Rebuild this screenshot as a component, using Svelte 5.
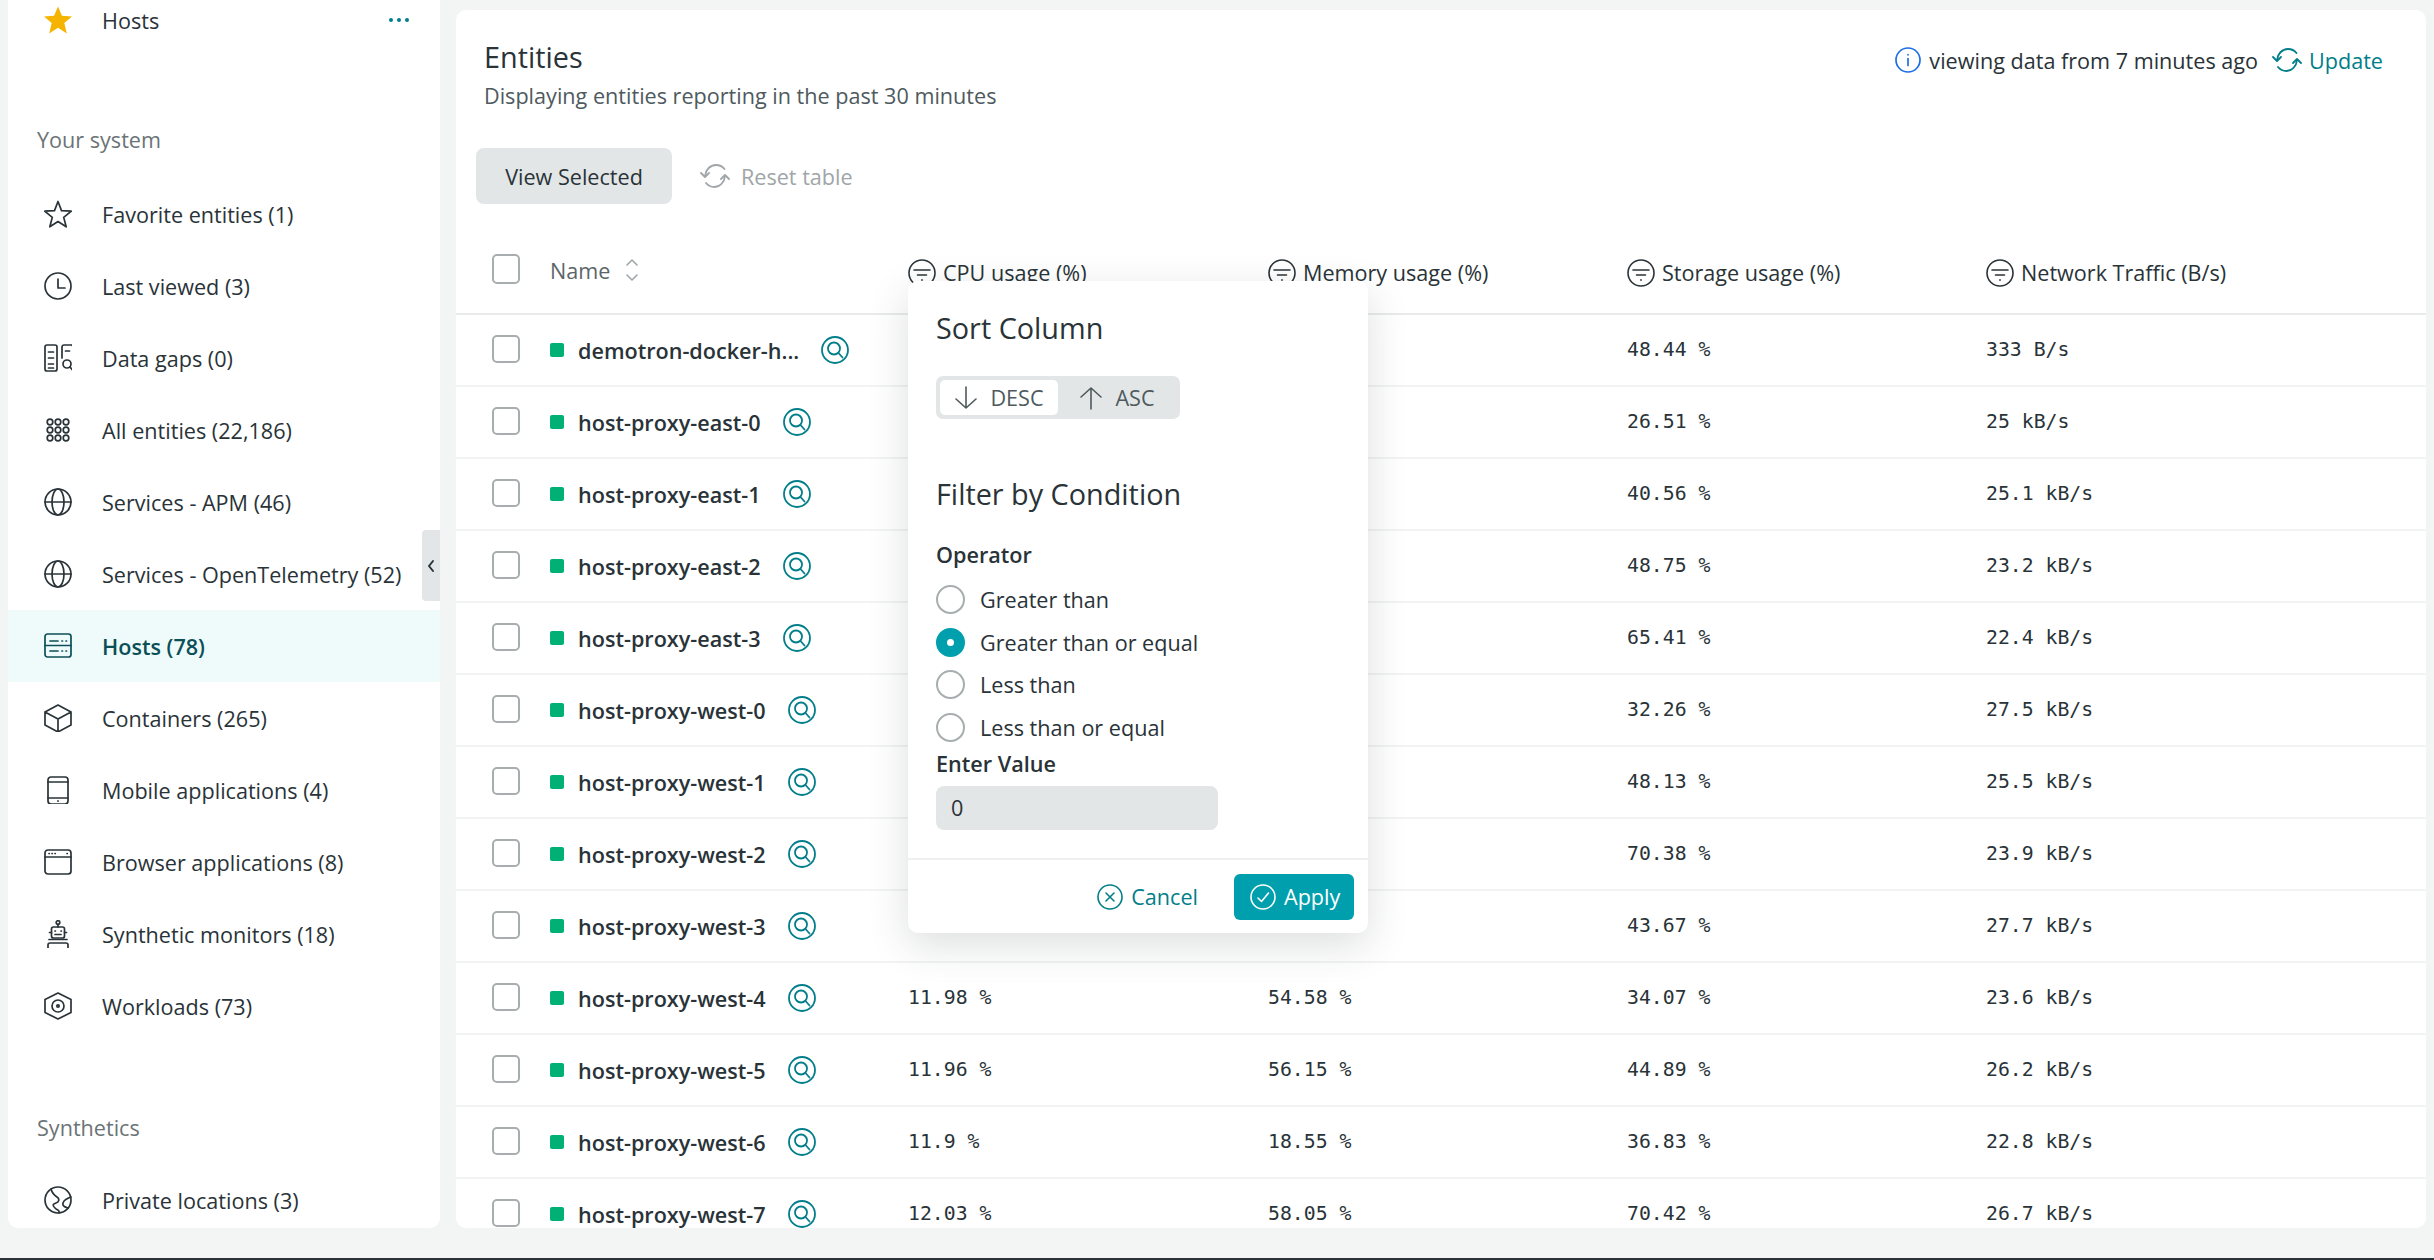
<script>
  const nav = [
    ['star', 'Favorite entities (1)'],
    ['clock', 'Last viewed (3)'],
    ['gaps', 'Data gaps (0)'],
    ['grid', 'All entities (22,186)'],
    ['globe', 'Services - APM (46)'],
    ['globe', 'Services - OpenTelemetry (52)'],
    ['server', 'Hosts (78)'],
    ['cube', 'Containers (265)'],
    ['tablet', 'Mobile applications (4)'],
    ['browser', 'Browser applications (8)'],
    ['robot', 'Synthetic monitors (18)'],
    ['hexagon', 'Workloads (73)']
  ];
  const rows = [
    ['demotron-docker-h...', '', '', '48.44 %', '333 B/s'],
    ['host-proxy-east-0', '', '', '26.51 %', '25 kB/s'],
    ['host-proxy-east-1', '', '', '40.56 %', '25.1 kB/s'],
    ['host-proxy-east-2', '', '', '48.75 %', '23.2 kB/s'],
    ['host-proxy-east-3', '', '', '65.41 %', '22.4 kB/s'],
    ['host-proxy-west-0', '', '', '32.26 %', '27.5 kB/s'],
    ['host-proxy-west-1', '', '', '48.13 %', '25.5 kB/s'],
    ['host-proxy-west-2', '', '', '70.38 %', '23.9 kB/s'],
    ['host-proxy-west-3', '', '', '43.67 %', '27.7 kB/s'],
    ['host-proxy-west-4', '11.98 %', '54.58 %', '34.07 %', '23.6 kB/s'],
    ['host-proxy-west-5', '11.96 %', '56.15 %', '44.89 %', '26.2 kB/s'],
    ['host-proxy-west-6', '11.9 %', '18.55 %', '36.83 %', '22.8 kB/s'],
    ['host-proxy-west-7', '12.03 %', '58.05 %', '70.42 %', '26.7 kB/s']
  ];
  const heads = ['CPU usage (%)', 'Memory usage (%)', 'Storage usage (%)', 'Network Traffic (B/s)'];
  const ops = [['Greater than', false], ['Greater than or equal', true], ['Less than', false], ['Less than or equal', false]];
</script>

{#snippet navIcon(name)}
  <svg class="nav-icon" viewBox="0 0 28 28" fill="none" stroke="currentColor" stroke-width="1.7" stroke-linejoin="round" stroke-linecap="round">
    {#if name === 'star'}
      <polygon points="14,1.5 17.5,10.6 27.3,11.2 19.7,17.4 22.2,26.8 14,21.5 5.8,26.8 8.3,17.4 .7,11.2 10.5,10.6" />
    {:else if name === 'clock'}
      <circle cx="14" cy="14" r="13" /><path d="M14 7v9h7" />
    {:else if name === 'gaps'}
      <rect x="1" y="1" width="12" height="26" rx="2" /><path d="M4.5 8h5M4.5 14h5M4.5 20h5M4.5 24h5" />
      <path d="M18 14V3a2 2 0 0 1 2-2h7a2 2 0 0 1 2 2v11M21.5 7h4" /><circle cx="23" cy="20" r="4" /><path d="M26 23l3 3.5" />
    {:else if name === 'grid'}
      {#each [6, 14, 22] as y}{#each [6, 14, 22] as x}<circle cx={x} cy={y} r="2.8" />{/each}{/each}
    {:else if name === 'globe'}
      <circle cx="14" cy="14" r="13" /><ellipse cx="14" cy="14" rx="6" ry="13" /><path d="M1 14h26" />
    {:else if name === 'server'}
      <rect x="1" y="2" width="26" height="23" rx="2.5" /><path d="M1 13.5h26M6 9h8M6 19h8M18 9h.5M22 9h.5M18 19h.5M22 19h.5" />
    {:else if name === 'cube'}
      <path d="M14 1l13 7v13l-13 7-13-7V8zM1 8l13 7 13-7M14 15v13" />
    {:else if name === 'tablet'}
      <rect x="4" y="1" width="20" height="27" rx="3" /><path d="M4 6h20M4 22h20M13.8 25h.4" />
    {:else if name === 'browser'}
      <rect x="1" y="2" width="26" height="24" rx="3" /><path d="M1 9h26M5 5.5h.3M8 5.5h.3M11 5.5h.3M23 5.5h.3" />
    {:else if name === 'robot'}
      <circle cx="14" cy="2.500" r="1.800" /><path d="M14 4.300V7" /><rect x="7.500" y="7" width="13" height="11" rx="2" /><path d="M5.500 12.500h2M20.500 12.500h2M11 11h.4M17 11h.4M11 14.500h6M5 19.500h18M4 28v-3a2 2 0 0 1 2-2h16a2 2 0 0 1 2 2v3" />
    {:else if name === 'hexagon'}
      <path d="M14 1l13 6.500v13L14 27 1 20.500v-13z" /><circle cx="14" cy="14" r="6" /><circle cx="14" cy="14" r="1.200" />
    {:else if name === 'planet'}
      <circle cx="14" cy="14" r="13" /><path d="M7 3c1 4 3 6 6 8s2 5-1 6-4 2-1 5 5 2 4 5M27 11c-3 1-7 3-8 6s2 4 5 5" />
    {/if}
  </svg>
{/snippet}

{#snippet refresh(cls)}
  <svg class={cls} viewBox="0 0 30 26" fill="none" stroke="currentColor" stroke-width="1.800" stroke-linecap="round" stroke-linejoin="round">
    <path d="M5 13c.5-6 5-11 11-11 3.500 0 6.500 1.500 8.500 4" /><path d="M25 13c-.5 6-5 11-10.500 11-3.500 0-6.500-1.500-8.500-4" />
    <path d="M1 10l4 4 4-4M21 16l4-4 4 4" />
  </svg>
{/snippet}

{#snippet filterIcon()}
  <svg class="filter" viewBox="0 0 28 28" fill="none" stroke="currentColor" stroke-width="1.600" stroke-linecap="round">
    <circle cx="14" cy="14" r="13" /><path d="M6 11h16M9.500 16h9M13.700 21h.6" />
  </svg>
{/snippet}

<div class="page">
  <div class="shell">
    <aside class="sidebar">
      <div class="nav-item pinned">
        <svg class="nav-icon gold" viewBox="0 0 28 28"><polygon points="14,.5 17.900,9.800 28,10.500 20.300,17 22.800,27.500 14,21.800 5.200,27.500 7.700,17 0,10.500 10.100,9.800" /></svg>
        <span>Hosts</span>
        <span class="dots"><i></i><i></i><i></i></span>
      </div>
      <div class="label">Your system</div>
      {#each nav as [icon, text]}
        <div class="nav-item" class:active={icon === 'server'}>
          {@render navIcon(icon)}
          <span>{text}</span>
        </div>
      {/each}
      <div class="label synth">Synthetics</div>
      <div class="nav-item">
        {@render navIcon('planet')}
        <span>Private locations (3)</span>
      </div>
      <div class="collapse">
        <svg viewBox="0 0 10 16" fill="none" stroke="currentColor" stroke-width="2" stroke-linecap="round" stroke-linejoin="round"><path d="M7 3L3 8l4 5" /></svg>
      </div>
    </aside>

    <main class="main">
      <header class="top">
        <div>
          <h1>Entities</h1>
          <p>Displaying entities reporting in the past 30 minutes</p>
        </div>
        <div class="freshness">
          <svg class="info" viewBox="0 0 26 26" fill="none" stroke="#1b6fe0" stroke-width="1.700" stroke-linecap="round"><circle cx="13" cy="13" r="12" /><path d="M13 11.500v7M13 7.500v.3" /></svg>
          <span>viewing data from 7 minutes ago</span>
          <span class="update">{@render refresh('refresh')}Update</span>
        </div>
      </header>

      <div class="actions">
        <button class="view">View Selected</button>
        <span class="reset">{@render refresh('refresh')}Reset table</span>
      </div>

      <div class="row head">
        <span class="check"></span>
        <span class="name-head">Name
          <svg class="sort" viewBox="0 0 14 24" fill="none" stroke="currentColor" stroke-width="1.600" stroke-linecap="round" stroke-linejoin="round"><path d="M2 7l5-5 5 5M2 17l5 5 5-5" /></svg>
        </span>
        {#each heads as h}
          <span class="col-head">{@render filterIcon()}{h}</span>
        {/each}
      </div>

      {#each rows as r}
        <div class="row">
          <span class="check"></span>
          <span class="name">
            <i class="status"></i>
            <b>{r[0]}</b>
            <svg class="search" viewBox="0 0 28 28" fill="none" stroke="currentColor" stroke-width="1.800" stroke-linecap="round"><circle cx="14" cy="14" r="13" /><circle cx="13" cy="12.500" r="6" /><path d="M17.500 17l4 4.500" /></svg>
          </span>
          <span class="num">{r[1]}</span>
          <span class="num">{r[2]}</span>
          <span class="num">{r[3]}</span>
          <span class="num">{r[4]}</span>
        </div>
      {/each}

      <section class="popover">
        <div class="pop-body">
          <h2>Sort Column</h2>
          <div class="segmented">
            <span class="seg on">
              <svg viewBox="0 0 24 24" fill="none" stroke="currentColor" stroke-width="1.600" stroke-linecap="round" stroke-linejoin="round"><path d="M12 1v21M2 13l10 9 10-9" /></svg>DESC
            </span>
            <span class="seg">
              <svg viewBox="0 0 24 24" fill="none" stroke="currentColor" stroke-width="1.600" stroke-linecap="round" stroke-linejoin="round"><path d="M12 23V2M2 11l10-9 10 9" /></svg>ASC
            </span>
          </div>
          <h2 class="second">Filter by Condition</h2>
          <div class="field-label">Operator</div>
          <div class="radios">
            {#each ops as [label, on]}
              <div class="radio-row">
                <span class="radio" class:on></span>
                <span>{label}</span>
              </div>
            {/each}
          </div>
          <div class="field-label value-label">Enter Value</div>
          <div class="input">0</div>
        </div>
        <footer class="pop-foot">
          <span class="cancel">
            <svg viewBox="0 0 26 26" fill="none" stroke="currentColor" stroke-width="1.600" stroke-linecap="round"><circle cx="13" cy="13" r="12" /><path d="M9 9l8 8M17 9l-8 8" /></svg>
            Cancel
          </span>
          <button class="apply">
            <svg viewBox="0 0 26 26" fill="none" stroke="currentColor" stroke-width="1.600" stroke-linecap="round" stroke-linejoin="round"><circle cx="13" cy="13" r="12" /><path d="M8 14l3.500 3.500L18.500 9" /></svg>
            Apply
          </button>
        </footer>
      </section>
    </main>
  </div>
  <div class="bar"></div>
</div>

<style>
  :global(body) { margin: 0; background: #f3f4f4; }
  .page {
    height: 1260px; overflow: hidden; display: flex; flex-direction: column;
    font-family: "Open Sans", "Noto Sans", sans-serif; font-size: 21.6px; color: #293338;
  }
  .shell {
    flex: 1; min-height: 0; display: grid; grid-template-columns: 432px 1970px; column-gap: 16px;
    padding: 0 8px 30px; box-sizing: border-box;
  }
  .bar { height: 2px; background: #293338; }

  .sidebar { position: relative; background: #fff; border-radius: 0 0 10px 10px; overflow: hidden; }
  .sidebar > :first-child { margin-top: -16px; }
  .nav-item { height: 72px; display: flex; align-items: center; padding-left: 36px; box-sizing: border-box; }
  .nav-icon { width: 28px; height: 28px; flex: none; margin-right: 30px; color: #293338; }
  .gold { fill: #f5b400; }
  .pinned { position: relative; }
  .dots { position: absolute; left: 381px; top: 34px; display: flex; gap: 4px; }
  .dots i { width: 4px; height: 4px; border-radius: 50%; background: #007e8a; }
  .label { height: 44px; line-height: 44px; margin: 62px 0 16px 29px; color: #6b7476; }
  .synth { margin: 64px 0 14px 29px; }
  .active { background: #effbfb; color: #0b4f57; font-weight: 600; }
  .active .nav-icon { color: #0b4f57; }
  .collapse {
    position: absolute; left: 414px; top: 530px; width: 18px; height: 71px; background: #e3e6e7;
    border-radius: 4px 0 0 4px; display: flex; align-items: center; justify-content: center; color: #293338;
  }
  .collapse svg { width: 10px; height: 16px; }

  .main { position: relative; margin-top: 10px; background: #fff; border-radius: 10px; overflow: hidden; }
  .top { display: flex; justify-content: space-between; padding: 27px 43px 0 28px; }
  h1 { margin: 0; font-size: 28.8px; line-height: 40px; font-weight: 400; }
  .top p { margin: 4px 0 0; line-height: 30px; color: #4e5a5e; }
  .freshness { display: flex; align-items: center; height: 46px; }
  .info { width: 26px; height: 26px; margin-right: 8px; }
  .update { display: flex; align-items: center; margin-left: 14px; color: #007e8a; }
  .refresh { width: 30px; height: 26px; margin-right: 7px; }

  .actions { display: flex; align-items: center; margin: 37px 0 0 20px; }
  .view {
    width: 196px; height: 56px; border: 0; border-radius: 8px; background: #e3e6e7; color: #293338;
    font: inherit; padding: 0;
  }
  .reset { display: flex; align-items: center; margin-left: 28px; color: #a0a6a8; }
  .reset .refresh { margin-right: 11px; }

  .row {
    display: grid; grid-template-columns: 94px 358px 360px 359px 359px 1fr; align-items: center;
    height: 72px; box-sizing: border-box; padding-left: 0; border-bottom: 2px solid #f2f3f3;
  }
  .row.head { height: 87px; margin-top: 24px; border-bottom: 2px solid #e8eaeb; color: #293338; }
  .check {
    width: 28px; height: 28px; margin: 0 0 3px 36px; box-sizing: border-box; border: 2px solid #a8aeb0; border-radius: 5px;
  }
  .head .check { margin-bottom: 4px; height: 30px; }
  .name-head { display: flex; align-items: center; color: #5b6669; margin-bottom: 1px; }
  .sort { width: 14px; height: 24px; margin-left: 15px; color: #a0a6a8; }
  .col-head { display: flex; align-items: center; margin-top: 4px; }
  .filter { width: 28px; height: 28px; margin-right: 7px; flex: none; }
  .name { display: flex; align-items: center; }
  .status { width: 14px; height: 14px; border-radius: 2px; background: #00b074; margin-right: 14px; }
  .name b { font-weight: 600; }
  .search { width: 28px; height: 28px; margin-left: 22px; color: #007e8a; }
  .num { font-family: "DejaVu Sans Mono", monospace; font-size: 19.8px; white-space: pre; margin-bottom: 2px; }

  .popover {
    position: absolute; left: 452px; top: 271px; width: 460px; height: 652px; background: #fff; border-radius: 10px;
    box-shadow: 0 12px 40px rgba(41, 51, 56, .16); display: flex; flex-direction: column;
  }
  .pop-body { flex: 1; padding: 27px 30px 0 28px; }
  h2 { margin: 0; font-size: 28.8px; line-height: 40px; font-weight: 400; }
  .second { margin-top: 55px; }
  .segmented {
    display: flex; width: 244px; height: 43px; margin-top: 28px; padding: 4px; box-sizing: border-box; background: #e3e6e7; border-radius: 7px;
  }
  .seg { display: flex; align-items: center; justify-content: center; gap: 12px; width: 118px; color: #4e5a5e; border-radius: 5px; }
  .seg.on { background: #fff; }
  .seg svg { width: 24px; height: 24px; }
  .field-label { font-weight: 600; line-height: 30px; margin-top: 26px; }
  .radios { margin-top: 8px; }
  .radio-row { display: flex; align-items: center; height: 42.7px; gap: 15px; }
  .radio { width: 29px; height: 29px; box-sizing: border-box; border: 2px solid #a8aeb0; border-radius: 50%; display: flex; align-items: center; justify-content: center; }
  .radio.on { border: 0; background: #009fad; }
  .radio.on::after { content: ""; width: 7px; height: 7px; border-radius: 50%; background: #fff; }
  .value-label { margin-top: 0; }
  .input { width: 282px; height: 44px; margin-top: 7px; padding-left: 15px; box-sizing: border-box; line-height: 44px; background: #e3e6e7; border-radius: 8px; }
  .pop-foot {
    height: 75px; box-sizing: border-box; border-top: 2px solid #eef0f0; display: flex; align-items: center; justify-content: flex-end; padding: 0 14px 0 0;
  }
  .cancel { display: flex; align-items: center; gap: 8px; color: #007e8a; margin-right: 36px; }
  .cancel svg, .apply svg { width: 26px; height: 26px; flex: none; }
  .apply {
    display: flex; align-items: center; gap: 8px; width: 120px; height: 46px; padding: 0 0 0 16px; box-sizing: border-box;
    border: 0; border-radius: 6px; background: #009fad; color: #fff; font: inherit;
  }
</style>
